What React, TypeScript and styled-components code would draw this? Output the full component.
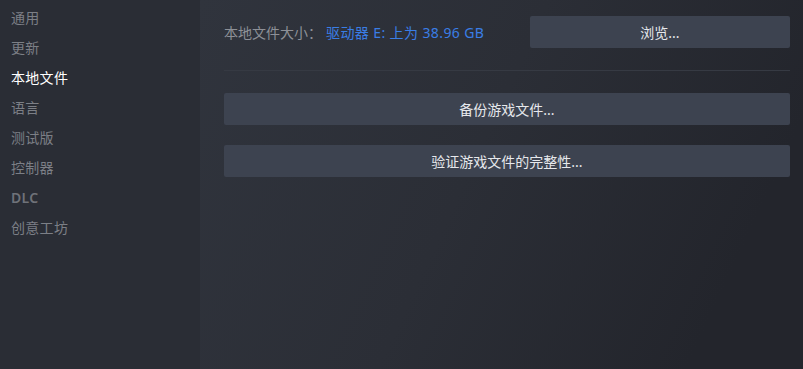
import React from "react";
import styled, { createGlobalStyle } from "styled-components";

const GlobalStyle = createGlobalStyle`
  html, body {
    margin: 0;
    padding: 0;
    background: #2a2d34;
  }
  body {
    font-family: "Noto Sans", "Noto Sans CJK SC", sans-serif;
  }
`;

const Window = styled.div`
  display: flex;
  width: 803px;
  height: 369px;
  overflow: hidden;
`;

const Sidebar = styled.nav`
  width: 200px;
  flex-shrink: 0;
  background: #2a2d35;
  display: flex;
  flex-direction: column;
  padding-top: 3px;
`;

const NavItem = styled.div<{ $active?: boolean; $latin?: boolean }>`
  height: 30px;
  line-height: 30px;
  padding-left: 11px;
  font-size: 14px;
  font-weight: ${(p) => (p.$latin ? 600 : 400)};
  color: ${(p) => (p.$active ? "#ffffff" : p.$latin ? "#6f7279" : "#7c7f86")};
  letter-spacing: 0.3px;
`;

const Content = styled.main`
  flex: 1;
  background: linear-gradient(115deg, #30343d 0%, #2b2e36 45%, #23252c 85%);
  padding: 16px 13px 0 24px;
  display: flex;
  flex-direction: column;
`;

const SizeRow = styled.div`
  display: flex;
  align-items: center;
  justify-content: space-between;
  height: 32px;
`;

const Label = styled.div`
  font-size: 14px;
  color: #8d9097;

  span {
    color: #3a7ee6;
    margin-left: 4px;
    letter-spacing: 0.4px;
  }
`;

const Button = styled.button<{ $width?: string }>`
  width: ${(p) => p.$width ?? "100%"};
  height: 32px;
  border: none;
  border-radius: 2px;
  background: #3d4350;
  color: #e6e8ec;
  font-family: "Noto Sans", "Noto Sans CJK SC", sans-serif;
  font-size: 14px;
  padding: 0;
  cursor: pointer;
`;

const Divider = styled.hr`
  border: none;
  height: 1px;
  background: #363a43;
  margin: 22px 0 22px 0;
`;

const Actions = styled.div`
  display: flex;
  flex-direction: column;
  gap: 20px;
`;

const navItems = ["通用", "更新", "本地文件", "语言", "测试版", "控制器", "DLC", "创意工坊"];

export default function App() {
  return (
    <>
      <GlobalStyle />
      <Window>
        <Sidebar>
          {navItems.map((item) => (
            <NavItem key={item} $active={item === "本地文件"} $latin={item === "DLC"}>
              {item}
            </NavItem>
          ))}
        </Sidebar>
        <Content>
          <SizeRow>
            <Label>
              本地文件大小：<span>驱动器 E: 上为 38.96 GB</span>
            </Label>
            <Button $width="260px">浏览...</Button>
          </SizeRow>
          <Divider />
          <Actions>
            <Button>备份游戏文件...</Button>
            <Button>验证游戏文件的完整性...</Button>
          </Actions>
        </Content>
      </Window>
    </>
  );
}
